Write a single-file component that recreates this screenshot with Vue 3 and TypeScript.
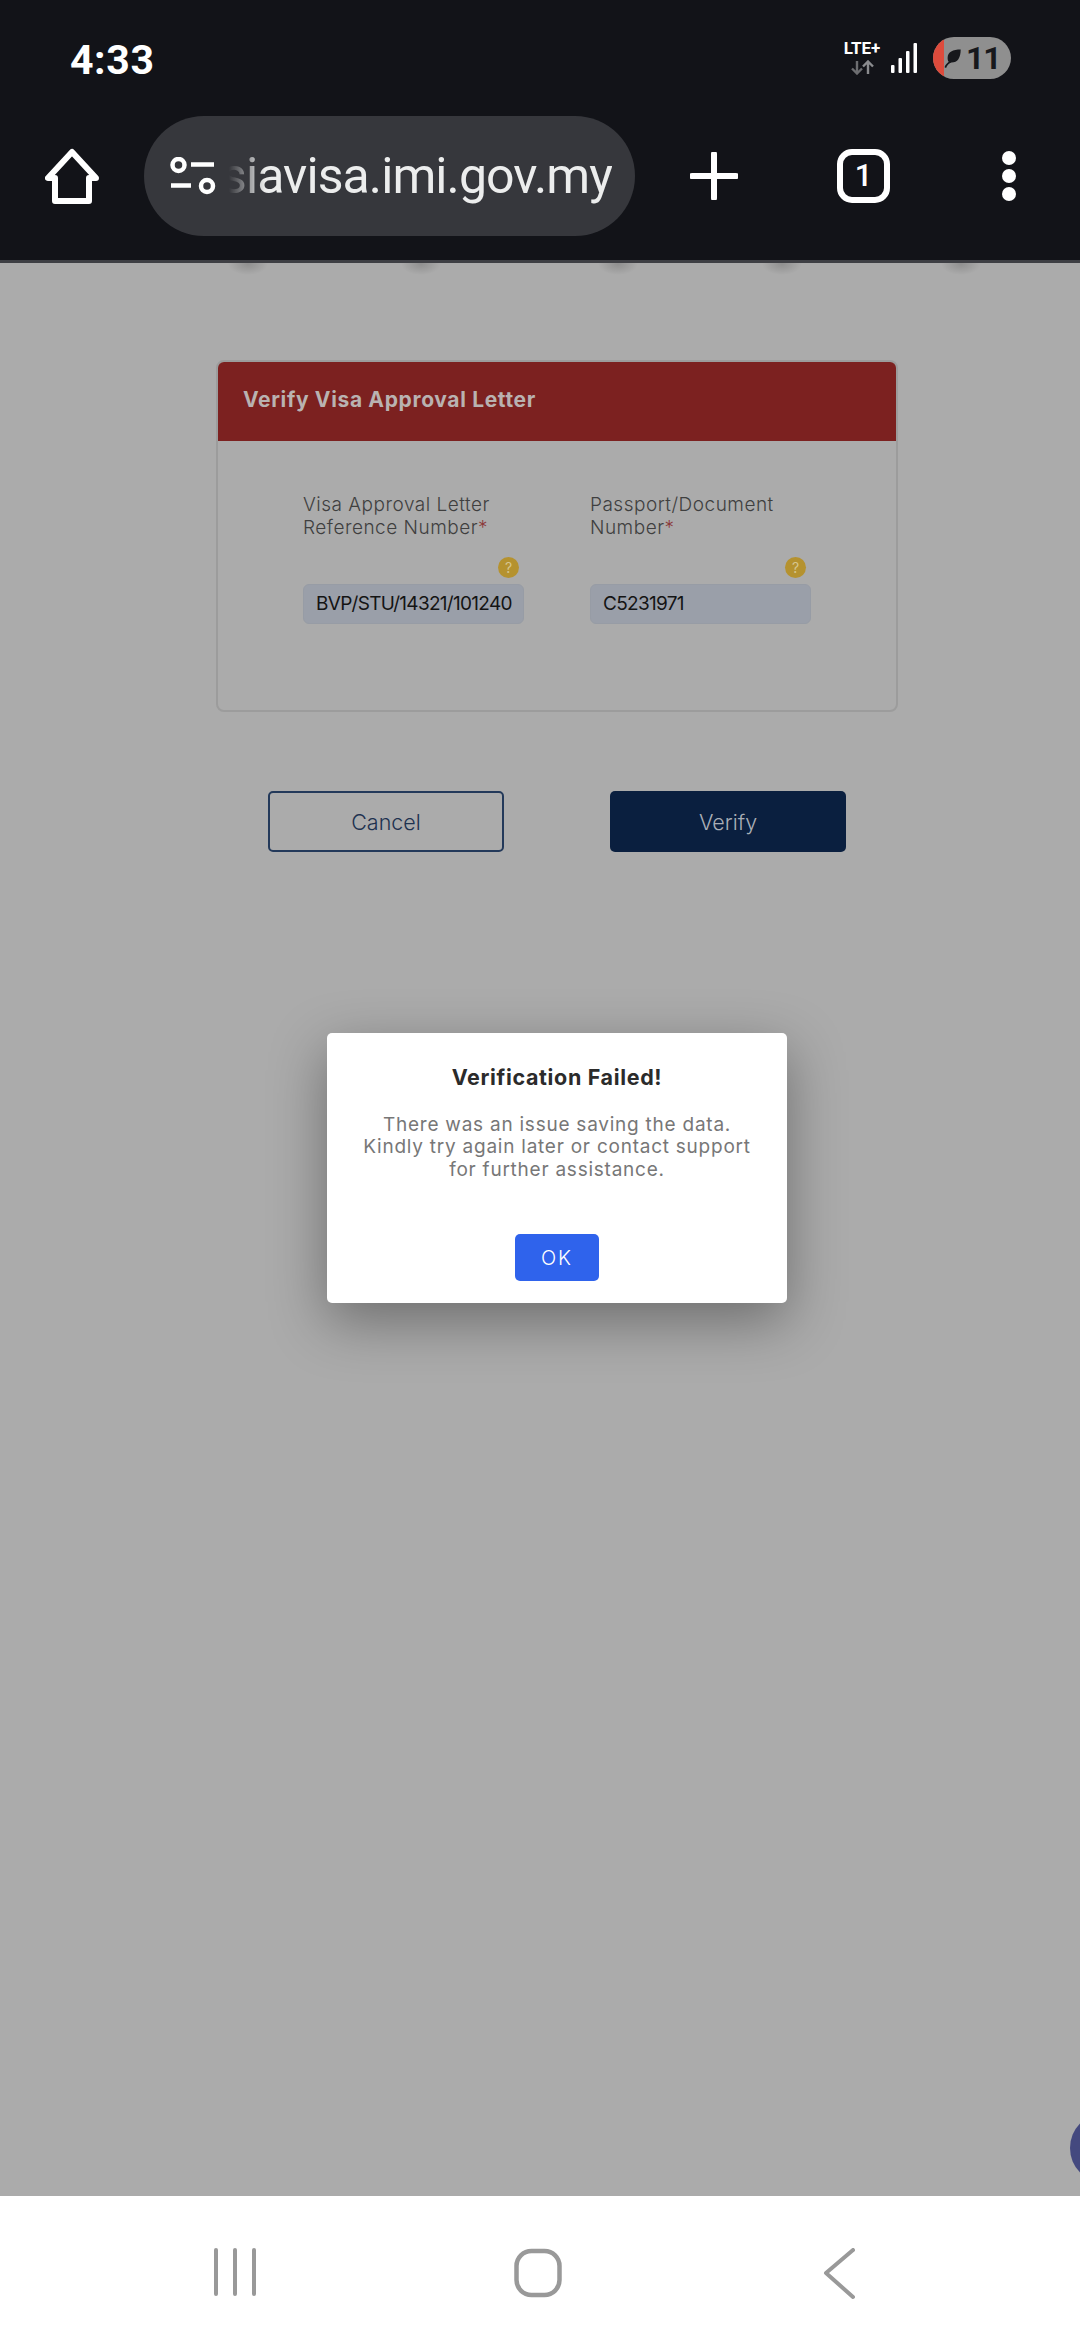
<script setup lang="ts">
interface Field {
  label: string
  tail: string
  value: string
}

const fields: Field[] = [
  { label: 'Visa Approval Letter', tail: 'Reference Number', value: 'BVP/STU/14321/101240' },
  { label: 'Passport/Document', tail: 'Number', value: 'C5231971' },
]

// left-over shadow blobs of the scrolled page header, just under the toolbar
const smudges = [248, 421, 618, 782, 961]
</script>

<template>
  <div class="phone">
    <header class="chrome">
      <div class="status">
        <span class="clock">4:33</span>
        <div class="status-right">
          <div class="net">
            <span class="lte">LTE+</span>
            <svg class="arrows" width="24" height="15" viewBox="0 0 24 15" fill="none" stroke-width="2.4">
              <path d="M7 1v12M2 8.500l5 5 5-5" stroke="#6c6d70" />
              <path d="M18 14V2M13 6.500l5-5 5 5" stroke="#8a8b8e" />
            </svg>
          </div>
          <svg class="signal" width="27" height="30" viewBox="0 0 27 30" fill="#fff">
            <rect x="0" y="22" width="3.500" height="8" rx="1" />
            <rect x="7.500" y="15" width="3.500" height="15" rx="1" />
            <rect x="15" y="8" width="3.500" height="22" rx="1" />
            <rect x="22.500" y="0" width="3.500" height="30" rx="1" />
          </svg>
          <div class="battery">
            <span class="battery-low"></span>
            <svg class="leaf" width="22" height="20" viewBox="0 0 24 26" fill="#17181c">
              <path d="M22 2C12 2 5 5 5 13c0 2 .5 4 1.500 5C4 20 2 22 1 25l2 1c1-3 4-6 7-7 8 0 12-6 12-17Z" />
            </svg>
            <span class="level">11</span>
          </div>
        </div>
      </div>

      <div class="toolbar">
        <svg class="home" width="54" height="56" viewBox="0 0 54 56" fill="none" stroke="#fff" stroke-width="6" stroke-linejoin="round">
          <path d="M27 4 3 30h7v23h34V30h7Z" />
        </svg>
        <div class="omnibox">
          <svg class="tune" width="46" height="38" viewBox="0 0 46 38" fill="none" stroke="#fff" stroke-width="4.500">
            <circle cx="8.500" cy="8" r="6" />
            <path d="M21 7.500h23M1 28.500h20" />
            <circle cx="37" cy="29" r="6" />
          </svg>
          <div class="url"><span>malaysiavisa.imi.gov.my</span></div>
        </div>
        <svg class="plus" width="48" height="48" viewBox="0 0 48 48" stroke="#fff" stroke-width="6" stroke-linecap="round">
          <path d="M24 2v44M2 24h44" />
        </svg>
        <div class="tabs">1</div>
        <div class="menu">
          <i></i>
          <i></i>
          <i></i>
        </div>
      </div>
    </header>

    <main class="page">
      <span
        v-for="x in smudges"
        :key="x"
        class="smudge"
        :style="{ left: `${x - 20}px` }"
      ></span>

      <div class="content">
        <section class="card">
          <h2 class="card-title">Verify Visa Approval Letter</h2>
          <div class="card-body">
            <div v-for="f in fields" :key="f.label" class="field">
              <label class="field-label">{{ f.label }}<br />{{ f.tail }}<em>*</em></label>
              <span class="help">?</span>
              <div class="input">{{ f.value }}</div>
            </div>
          </div>
        </section>

        <div class="actions">
          <button class="btn btn-ghost">Cancel</button>
          <button class="btn btn-solid">Verify</button>
        </div>
      </div>

      <div class="dialog">
        <h3 class="dialog-title">Verification Failed!</h3>
        <p class="dialog-text">
          There was an issue saving the data.<br />
          Kindly try again later or contact support<br />
          for further assistance.
        </p>
        <button class="dialog-ok">OK</button>
      </div>

      <span class="chat-bubble"></span>
    </main>

    <nav class="navbar">
      <svg width="42" height="48" viewBox="0 0 42 48" stroke="#999" stroke-width="4" stroke-linecap="round">
        <path d="M2 2v44M21 2v44M40 2v44" />
      </svg>
      <svg width="48" height="50" viewBox="0 0 48 50" fill="none" stroke="#999" stroke-width="4.500">
        <rect x="2.500" y="3" width="43" height="44" rx="15" />
      </svg>
      <svg class="nav-back" width="32" height="52" viewBox="0 0 32 52" fill="none" stroke="#999" stroke-width="4" stroke-linecap="round" stroke-linejoin="round">
        <path d="M30 2 3 25l27 24" />
      </svg>
    </nav>
  </div>
</template>

<style scoped>
.phone {
  width: 1080px;
  height: 2340px;
  display: flex;
  flex-direction: column;
  overflow: hidden;
  font-family: Inter, "Liberation Sans", sans-serif;
}

/* browser chrome */
.chrome {
  height: 263px;
  box-sizing: border-box;
  background: #121318;
  border-bottom: 3px solid #3e3f44;
  color: #fff;
  flex: none;
}

.status {
  height: 116px;
  box-sizing: border-box;
  padding: 37px 69px 0 70px;
  display: flex;
  justify-content: space-between;
  align-items: flex-start;
}

.clock {
  font: 700 41px/42px Roboto, sans-serif;
  letter-spacing: 0.6px;
  margin-top: 2px;
}

.status-right {
  display: flex;
  align-items: flex-start;
}

.net {
  width: 40px;
  display: flex;
  flex-direction: column;
  align-items: center;
  margin-top: 3px;
}

.lte {
  font: 700 17px/16px Roboto, sans-serif;
  white-space: nowrap;
}

.arrows {
  margin-top: 4px;
}

.signal {
  margin: 6px 0 0 9px;
}

.battery {
  position: relative;
  width: 78px;
  height: 42px;
  margin-left: 15px;
  border-radius: 21px;
  background: #8f8f8f;
  overflow: hidden;
  display: flex;
  align-items: center;
  color: #17181c;
}

.battery-low {
  width: 11px;
  height: 100%;
  background: #dd4b3c;
  flex: none;
}

.leaf {
  margin-left: -2px;
  flex: none;
}

.level {
  font: 700 32px/42px Roboto, sans-serif;
  margin-left: 2px;
  letter-spacing: -1px;
}

.toolbar {
  display: flex;
  align-items: center;
  height: 120px;
}

.home {
  margin-left: 45px;
  flex: none;
}

.omnibox {
  width: 491px;
  height: 120px;
  margin-left: 45px;
  box-sizing: border-box;
  padding: 0 23px 0 26px;
  border-radius: 60px;
  background: #36373c;
  display: flex;
  align-items: center;
  flex: none;
}

.tune {
  flex: none;
}

.url {
  flex: 1;
  min-width: 0;
  margin-left: 13px;
  display: flex;
  justify-content: flex-end;
  overflow: hidden;
  white-space: nowrap;
  font: 400 50px/64px Roboto, sans-serif;
  letter-spacing: -0.9px;
  color: #eceded;
  -webkit-mask-image: linear-gradient(to right, transparent 0, #000 36px);
  mask-image: linear-gradient(to right, transparent 0, #000 36px);
}

.plus {
  margin-left: 55px;
  flex: none;
}

.tabs {
  width: 53px;
  height: 54px;
  margin-left: 99px;
  box-sizing: border-box;
  border: 6px solid #fff;
  border-radius: 15px;
  text-align: center;
  font: 500 31px/42px Roboto, sans-serif;
  flex: none;
}

.menu {
  margin-left: 112px;
  display: flex;
  flex-direction: column;
  gap: 4px;
}

.menu i {
  width: 14px;
  height: 14px;
  border-radius: 50%;
  background: #fff;
}

/* dimmed page */
.page {
  position: relative;
  flex: 1;
  background: #ababab;
  overflow: hidden;
}

.smudge {
  position: absolute;
  top: -10px;
  width: 40px;
  height: 22px;
  border-radius: 50%;
  background: radial-gradient(closest-side, rgba(0, 0, 0, 0.16), rgba(0, 0, 0, 0));
}

.content {
  width: 682px;
  margin: 97px 0 0 216px;
}

.card {
  height: 352px;
  box-sizing: border-box;
  border: 2px solid #9c9c9c;
  border-radius: 8px;
  overflow: hidden;
}

.card-title {
  height: 79px;
  margin: 0;
  padding-left: 25px;
  background: #7c2120;
  color: #b9b2b1;
  font-size: 21px;
  font-weight: 700;
  letter-spacing: 0.65px;
  line-height: 76px;
}

.card-body {
  display: flex;
  gap: 66px;
  padding: 52px 0 0 85px;
}

.field {
  width: 221px;
  display: flex;
  flex-direction: column;
}

.field-label {
  height: 53px;
  color: #3f3f3f;
  font-size: 19px;
  letter-spacing: 0.5px;
  line-height: 23px;
  font-weight: 300;
}

.field-label em {
  color: #8c3a3a;
  font-style: normal;
}

.help {
  align-self: flex-end;
  width: 21px;
  height: 21px;
  margin: 11px 5px 6px 0;
  border-radius: 50%;
  background: #b5922f;
  color: #d6c690;
  text-align: center;
  font-size: 14px;
  line-height: 21px;
}

.input {
  height: 40px;
  box-sizing: border-box;
  padding-left: 12px;
  border: 1px solid #979ca5;
  border-radius: 6px;
  background: #9a9fa9;
  color: #141414;
  font-size: 19px;
  letter-spacing: -0.7px;
  line-height: 38px;
  white-space: nowrap;
  overflow: hidden;
}

.actions {
  display: flex;
  gap: 106px;
  margin: 79px 0 0 52px;
}

.btn {
  width: 236px;
  height: 61px;
  box-sizing: border-box;
  border-radius: 5px;
  font-family: inherit;
  font-size: 21.500px;
  font-weight: 300;
}

.btn-ghost {
  border: 2px solid #23395a;
  background: transparent;
  color: #1e3250;
}

.btn-solid {
  border: 0;
  background: #0a1f3f;
  color: #a9aeb6;
}

.dialog {
  position: absolute;
  left: 327px;
  top: 770px;
  width: 460px;
  height: 270px;
  box-sizing: border-box;
  padding-top: 30px;
  border-radius: 5px;
  background: #fff;
  box-shadow: 0 18px 56px rgba(0, 0, 0, 0.36);
  display: flex;
  flex-direction: column;
  align-items: center;
  text-align: center;
}

.dialog-title {
  margin: 0;
  color: #2b2b2b;
  font-size: 21.500px;
  font-weight: 700;
  letter-spacing: 0.65px;
  line-height: 28px;
}

.dialog-text {
  margin: 23px 0 0;
  color: #777;
  font-size: 19px;
  font-weight: 400;
  line-height: 22.400px;
  letter-spacing: 0.76px;
  white-space: nowrap;
}

.dialog-ok {
  width: 84px;
  height: 47px;
  margin-top: 53px;
  border: 0;
  border-radius: 5px;
  background: #2f63ec;
  color: #fff;
  font-family: inherit;
  font-size: 20px;
  font-weight: 300;
  letter-spacing: 2px;
}

.chat-bubble {
  position: absolute;
  left: 1070px;
  top: 1850px;
  width: 70px;
  height: 70px;
  border-radius: 50%;
  background: #44497f;
}

/* system nav */
.navbar {
  height: 144px;
  flex: none;
  background: #fff;
  position: relative;
  display: flex;
  align-items: flex-start;
  padding: 52px 0 0 214px;
  box-sizing: border-box;
  gap: 258px;
}

.nav-back {
  margin-left: 3px;
}
</style>

<style>
body {
  background: #fff;
}
</style>
